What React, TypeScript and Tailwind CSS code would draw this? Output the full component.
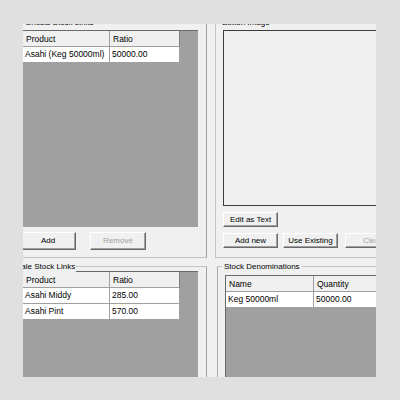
import React from "react";

type Col = { title: string; cls: string };

function Button({ label, className, disabled }: { label: string; className: string; disabled?: boolean }) {
  return (
    <div
      className={`flex shrink-0 items-center justify-center overflow-hidden whitespace-nowrap border border-t-white border-l-white border-r-[#696969] border-b-[#696969] bg-[#f0f0f0] text-[8px] shadow-[inset_-1px_-1px_0_#a0a0a0] ${
        disabled ? "text-[#a0a0a0]" : "text-black"
      } ${className}`}
    >
      {label}
    </div>
  );
}

function DataGrid({ cols, rows, className }: { cols: Col[]; rows: string[][]; className: string }) {
  return (
    <div className={`flex flex-col overflow-hidden border-t border-l border-t-[#696969] border-l-[#696969] bg-[#a0a0a0] ${className}`}>
      <div className="flex">
        {cols.map((c, i) => (
          <div
            key={c.title}
            className={`flex h-[16px] shrink-0 items-center whitespace-nowrap border-r border-b border-b-[#a0a0a0] bg-[#f0f0f0] pt-[1px] pl-[3px] text-[8.5px] text-black ${
              i === cols.length - 1 ? "border-r-[#808080]" : "border-r-[#a0a0a0]"
            } ${c.cls}`}
          >
            {c.title}
          </div>
        ))}
      </div>
      {rows.map((r) => (
        <div key={r[0]} className="flex">
          {r.map((v, i) => (
            <div
              key={i}
              className={`flex h-[16px] shrink-0 items-center whitespace-nowrap border-r border-b border-[#a0a0a0] bg-white pl-[2px] text-[8.5px] text-black ${cols[i].cls}`}
            >
              {v}
            </div>
          ))}
        </div>
      ))}
    </div>
  );
}

function Title({ text, className }: { text: string; className: string }) {
  return (
    <span className={`absolute whitespace-nowrap bg-[#f0f0f0] text-[8px] leading-[11px] text-black ${className}`}>
      {text}
    </span>
  );
}

const linkCols: Col[] = [
  { title: "Product", cls: "w-[87px]" },
  { title: "Ratio", cls: "w-[70px]" },
];

const denomCols: Col[] = [
  { title: "Name", cls: "w-[88px]" },
  { title: "Quantity", cls: "w-[90px]" },
];

export default function App() {
  return (
    <div className="flex h-[400px] w-[400px] items-start bg-[#e0e0e0] pl-[23px] pt-[24px] font-['Liberation_Sans',Arial,sans-serif]">
      <div className="h-[353px] w-[353px] overflow-hidden bg-[#f0f0f0]">
        <div className="-mt-[1px] -ml-[9px] flex w-[420px] flex-col gap-[8px]">
          {/* upper panels */}
          <div className="flex items-start gap-[8px]">
            <div className="relative flex w-[193px] shrink-0 flex-col border border-[#c4c4c4] border-r-[#a0a0a0] pt-[6px] pr-[8px] pb-[7px] pl-[5px]">
              <Title text="Ghosts Stock Links" className="-top-[7px] left-[9px] px-[1px]" />
              <DataGrid
                cols={linkCols}
                rows={[["Asahi (Keg 50000ml)", "50000.00"]]}
                className="ml-[2px] h-[197px] w-[176px]"
              />
              <div className="mt-[5px] flex gap-[14px]">
                <Button label="Add" className="h-[18px] w-[56px]" />
                <Button label="Remove" className="h-[18px] w-[56px]" disabled />
              </div>
            </div>
            <div className="relative flex w-[200px] shrink-0 flex-col border border-[#c4c4c4] pt-[6px] pb-[9px] pl-[7px]">
              <Title text="Button Image" className="-top-[7px] left-[5px] px-[1px]" />
              <div className="h-[176px] w-[180px] border border-[#3c3c3c] bg-[#f0f0f0]" />
              <Button label="Edit as Text" className="mt-[6px] h-[15px] w-[55px]" />
              <div className="mt-[6px] flex">
                <Button label="Add new" className="h-[15px] w-[55px]" />
                <Button label="Use Existing" className="ml-[5px] h-[15px] w-[55px]" />
                <Button label="Clear" className="ml-[7px] h-[15px] w-[55px]" disabled />
              </div>
            </div>
          </div>
          {/* lower panels */}
          <div className="flex items-start gap-[10px]">
            <div className="relative flex h-[130px] w-[193px] shrink-0 flex-col border border-b-0 border-[#c4c4c4] border-r-[#a0a0a0] pt-[4px] pl-[7px]">
              <Title text="Sale Stock Links" className="-top-[6px] left-0 px-[1px]" />
              <DataGrid
                cols={linkCols}
                rows={[
                  ["Asahi Middy", "285.00"],
                  ["Asahi Pint", "570.00"],
                ]}
                className="h-[120px] w-[176px]"
              />
            </div>
            <div className="relative flex h-[130px] w-[200px] shrink-0 flex-col border border-b-0 border-[#c4c4c4] border-l-[#a8a8a8] pt-[8px] pl-[7px]">
              <Title text="Stock Denominations" className="-top-[6px] left-[4px] px-[2px]" />
              <DataGrid
                cols={denomCols}
                rows={[["Keg 50000ml", "50000.00"]]}
                className="h-[110px] w-[190px]"
              />
            </div>
          </div>
        </div>
      </div>
    </div>
  );
}
